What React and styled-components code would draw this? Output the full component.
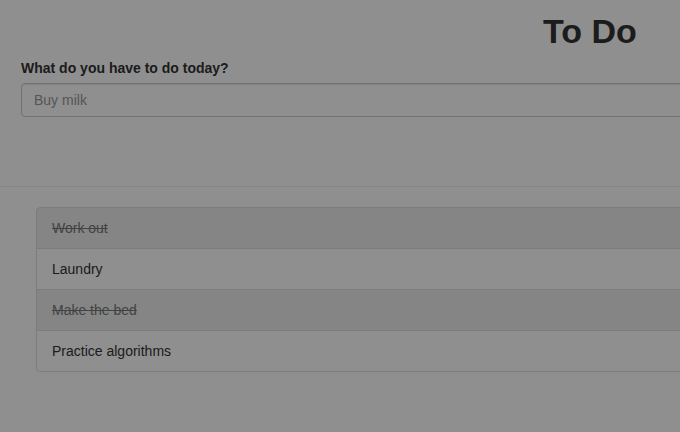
import React from 'react';
import styled, { createGlobalStyle, css } from 'styled-components';

const GlobalStyle = createGlobalStyle`
  html, body {
    margin: 0;
    padding: 0;
    background: #fff;
    overflow: hidden;
  }
  body {
    font-family: "Liberation Sans", Arial, Helvetica, sans-serif;
    font-size: 14px;
    line-height: 20px;
    color: #333;
  }
`;

const Page = styled.div`
  width: 1180px;
  height: 432px;
`;

const Title = styled.h1`
  margin: 12px 0 8px;
  font-size: 34px;
  font-weight: 700;
  line-height: 38px;
  text-align: center;
`;

const Form = styled.form`
  padding: 0 21px;
  margin-bottom: 69px;
`;

const Label = styled.label`
  display: block;
  margin-bottom: 5px;
  font-weight: 700;
`;

const Input = styled.input`
  display: block;
  box-sizing: border-box;
  width: 100%;
  height: 34px;
  padding: 6px 12px;
  font: inherit;
  color: #555;
  border: 1px solid #ccc;
  border-radius: 4px;
  box-shadow: inset 0 1px 1px rgba(0, 0, 0, 0.075);

  &::placeholder {
    color: #999;
  }
`;

const Rule = styled.hr`
  margin: 0 0 20px;
  border: 0;
  border-top: 1px solid #eee;
`;

const List = styled.ul`
  margin: 0 36px;
  padding: 0;
  list-style: none;
`;

const Item = styled.li`
  padding: 10px 15px;
  margin-bottom: -1px;
  background: #fff;
  border: 1px solid #ddd;

  &:first-child {
    border-top-left-radius: 4px;
    border-top-right-radius: 4px;
  }
  &:last-child {
    border-bottom-left-radius: 4px;
    border-bottom-right-radius: 4px;
  }

  ${props =>
    props.done &&
    css`
      background: #eee;
      color: #777;
      text-decoration: line-through;
    `}
`;

const Backdrop = styled.div`
  position: fixed;
  inset: 0;
  background: rgba(0, 0, 0, 0.44);
`;

const todos = [
  { id: 1, text: 'Work out', done: true },
  { id: 2, text: 'Laundry', done: false },
  { id: 3, text: 'Make the bed', done: true },
  { id: 4, text: 'Practice algorithms', done: false },
];

const App = () => (
  <>
    <GlobalStyle />
    <Page>
      <Title>To Do</Title>
      <Form onSubmit={e => e.preventDefault()}>
        <Label htmlFor="todo">What do you have to do today?</Label>
        <Input id="todo" type="text" placeholder="Buy milk" />
      </Form>
      <Rule />
      <List>
        {todos.map(todo => (
          <Item key={todo.id} done={todo.done}>
            {todo.text}
          </Item>
        ))}
      </List>
    </Page>
    <Backdrop />
  </>
);

export default App;
